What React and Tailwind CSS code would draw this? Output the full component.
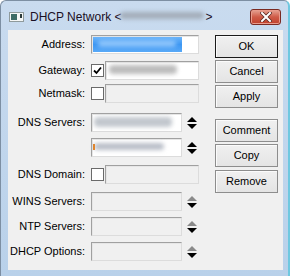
import React from "react";

/**
 * DHCP Network dialog (Win7 basic frame)
 */
const font = { fontFamily: '"Liberation Sans", Arial, sans-serif' };

function Spin({ dim = false }) {
  return (
    <svg viewBox="0 0 10 12" className="ml-[5px] h-[12px] w-[10px] shrink-0">
      <path d="M5 0 L10 5 H0 Z" fill={dim ? "#8a8a8a" : "#000"} />
      <path d="M0 7 H10 L5 12 Z" fill="#000" />
    </svg>
  );
}

function Box({ children, className = "", disabled = false }) {
  return (
    <div
      className={`relative h-[19px] border border-t-[#a0a0a0] border-l-[#a0a0a0] border-r-[#dcdcdc] border-b-[#dcdcdc] shadow-[inset_1px_1px_0_#e6e6e6] ${
        disabled ? "bg-[#f0f0f0]" : "bg-white"
      } ${className}`}
    >
      {children}
    </div>
  );
}

function Check({ checked = false }) {
  return (
    <div className="mr-[1px] flex h-[13px] w-[13px] shrink-0 items-center justify-center border border-[#6a6a6a] bg-white">
      {checked && (
        <svg viewBox="0 0 9 9" className="h-[9px] w-[9px]">
          <path d="M1 4.5 L3.5 7 L8 1.5" fill="none" stroke="#000" strokeWidth="1.8" />
        </svg>
      )}
    </div>
  );
}

function Row({ label, mt, children }) {
  return (
    <div className={`flex h-[19px] items-center ${mt}`}>
      <div className="w-[78px] pr-[1px] text-right text-[11px] text-black">{label}</div>
      <div className="ml-[5px] flex items-center">{children}</div>
    </div>
  );
}

function Blur({ className }) {
  return <div className={`absolute rounded-sm blur-[2px] ${className}`} />;
}

function Btn({ children, def = false, mt = "" }) {
  return (
    <div
      className={`flex h-[23px] w-[63px] items-center justify-center border text-[11px] text-black shadow-[inset_1px_1px_0_#fbfbfb] bg-gradient-to-b from-[#f0f0f0] to-[#e4e4e4] ${
        def ? "border-[#1a1a1a]" : "border-[#8d8d8d]"
      } ${mt}`}
    >
      {children}
    </div>
  );
}

export default function App() {
  return (
    <div
      className="flex h-[276px] w-[290px] flex-col overflow-hidden rounded-t-[6px] border-l border-t border-r-2 border-l-[#7d8fa3] border-t-[#7d8fa3] border-r-[#6fc8e0] bg-gradient-to-b from-[#c9dbef] to-[#b9d1ea]"
      style={font}
    >
      {/* Title bar */}
      <div className="relative flex h-[29px] shrink-0 items-center">
        <svg viewBox="0 0 15 10" className="ml-[8px] mt-[3px] h-[10px] w-[15px]">
          <rect x="0.5" y="0.5" width="14" height="9" fill="#f4f6f6" stroke="#8f9a9c" />
          <rect x="2" y="2" width="6" height="6" fill="#3d6b66" />
          <rect x="11" y="2" width="2" height="4" fill="#2b3a3a" />
        </svg>
        <div className="relative ml-[6px] mt-[3px] text-[12px] text-[#1a0f24]">
          DHCP Network &lt;
          <span className="inline-block w-[84px]" />
          &gt;
          <Blur className="left-[90px] top-[4px] h-[7px] w-[84px] bg-[#a3adb9]" />
        </div>
        <div className="absolute right-[7px] top-[8px] flex h-[16px] w-[31px] items-center justify-center rounded-[3px] border border-[#7a2a22] bg-gradient-to-b from-[#e5a394] via-[#cf5b47] to-[#c0402c] shadow-[inset_0_0_0_1px_#e99b8b]">
          <svg viewBox="0 0 12 10" className="h-[10px] w-[12px]">
            <path d="M2 1 L10 9 M10 1 L2 9" stroke="#5a2a24" strokeWidth="3.6" strokeLinecap="square" />
            <path d="M2 1 L10 9 M10 1 L2 9" stroke="#fff" strokeWidth="2" strokeLinecap="square" />
          </svg>
        </div>
      </div>

      {/* Client area */}
      <div className="ml-[7px] mr-[5px] flex h-[240px] shrink-0 bg-[#f0f0f0]">
        <div className="flex flex-col">
          <Row label="Address:" mt="mt-[5px]">
            <Box className="w-[108px]">
              <div className="absolute left-[1px] top-[1px] h-[15px] w-[89px] bg-gradient-to-b from-[#6ab4fa] via-[#3d97f3] to-[#58a9f7] blur-[0.6px]" />
              <Blur className="left-[6px] top-[4px] h-[7px] w-[78px] bg-[#8cc4fb]" />
            </Box>
          </Row>
          <Row label="Gateway:" mt="mt-[7px]">
            <Check checked />
            <Box className="w-[94px]">
              <Blur className="left-[3px] top-[3px] h-[9px] w-[68px] bg-[#bcbcbc]" />
            </Box>
          </Row>
          <Row label="Netmask:" mt="mt-[4px]">
            <Check />
            <Box className="w-[94px]" disabled />
          </Row>
          <Row label="DNS Servers:" mt="mt-[10px]">
            <Box className="w-[91px]">
              <Blur className="left-[2px] top-[3px] h-[10px] w-[78px] bg-[#c2c7ce]" />
            </Box>
            <Spin />
          </Row>
          <Row label="" mt="mt-[6px]">
            <Box className="w-[91px]">
              <Blur className="left-[2px] top-[4px] h-[7px] w-[70px] bg-[#b9bec8]" />
              <div className="absolute left-[1px] top-[5px] h-[6px] w-[2px] bg-[#e0862f]" />
            </Box>
            <Spin />
          </Row>
          <Row label="DNS Domain:" mt="mt-[8px]">
            <Check />
            <Box className="w-[94px]" disabled />
          </Row>
          <Row label="WINS Servers:" mt="mt-[8px]">
            <Box className="w-[91px]" disabled />
            <Spin dim />
          </Row>
          <Row label="NTP Servers:" mt="mt-[6px]">
            <Box className="w-[91px]" disabled />
            <Spin dim />
          </Row>
          <Row label="DHCP Options:" mt="mt-[6px]">
            <Box className="w-[91px]" disabled />
            <Spin dim />
          </Row>
        </div>

        <div className="ml-[16px] flex flex-col">
          <Btn def mt="mt-[5px]">OK</Btn>
          <Btn mt="mt-[2px]">Cancel</Btn>
          <Btn mt="mt-[2px]">Apply</Btn>
          <Btn mt="mt-[11px]">Comment</Btn>
          <Btn mt="mt-[2px]">Copy</Btn>
          <Btn mt="mt-[3px]">Remove</Btn>
        </div>
      </div>
    </div>
  );
}
